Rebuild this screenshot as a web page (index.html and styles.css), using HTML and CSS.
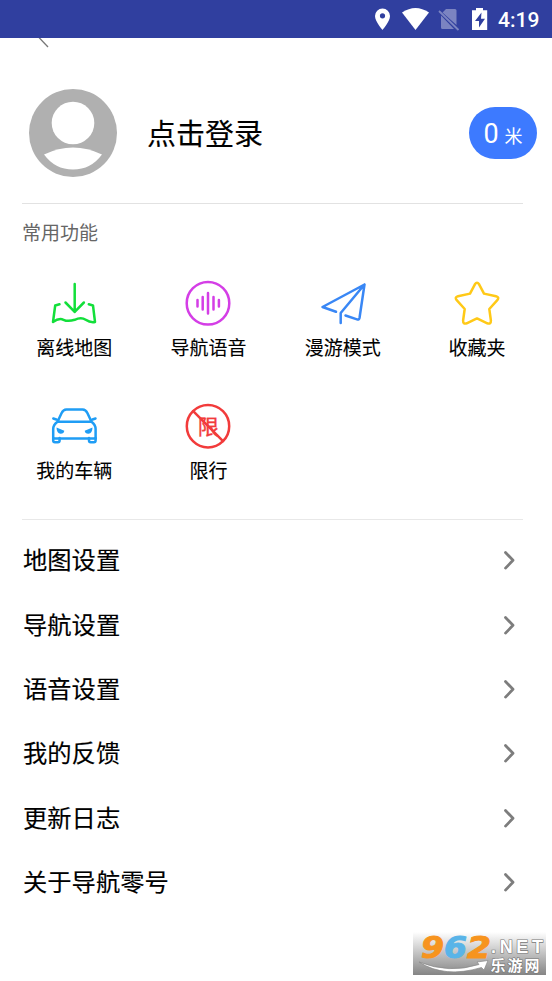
FILE: index.html
```html
<!DOCTYPE html>
<html lang="zh-CN">
<head>
<meta charset="utf-8">
<title>我的</title>
<link rel="stylesheet" href="styles.css">
</head>
<body>
<header class="status">
  <svg class="status-icons" viewBox="370 0 122 38" fill="#fff">
    <path fill-rule="evenodd" d="M382.500 8.500a7.500 7.500 0 0 0-7.500 7.500c0 5.500 7.500 14 7.500 14s7.500-8.500 7.500-14a7.500 7.500 0 0 0-7.500-7.500zm0 4.700a2.600 2.600 0 1 1 0 5.200 2.600 2.600 0 0 1 0-5.200z"/>
    <path d="M402 12.500Q415.500 3.500 429 12.500L415.500 30z"/>
    <g opacity=".36"><path d="M446 9h9q1.500 0 1.500 1.500V25L442.500 12.500zM441 15.500L454 29H442.500q-1.500 0-1.500-1.500z"/><path d="M439 11l19.500 19" stroke="#fff" stroke-width="1.800"/></g>
    <path fill-rule="evenodd" d="M472 10.300h4V8h7v2.300h4.200V30H472zM481.500 12.500l-6.500 8.500h4v6.500l6-8.700h-4z"/>
  </svg>
  <span class="clock">4:19</span>
</header>
<div class="topbar"><svg class="back" viewBox="36 38 16 12"><path d="M38.500 37l9.500 10" stroke="#777" stroke-width="1.300" fill="none"/></svg></div>
<main>
  <section class="profile">
    <svg class="avatar" viewBox="0 0 88 88"><circle cx="44" cy="44" r="44" fill="#b0b0b0"/><circle cx="44" cy="34" r="21.300" fill="#fff"/><path d="M15 65.500Q44 51.500 73 65.500Q62 80.500 44 80.500T15 65.500z" fill="#fff"/></svg>
    <span class="login">点击登录</span>
    <span class="distance"><b>0</b><i>米</i></span>
  </section>
  <section class="features">
    <h2>常用功能</h2>
    <div class="grid">
      <div class="item">
        <svg class="icon green" viewBox="50 279 48 48"><path d="M74.700 284v28M65.500 302.500l9.200 9.300 9.200-9.300M59.500 304.300l-4.300 1.200-2.200 16.500q6-4.300 10.500-2.200t11.200 0q6.500-3 11 0t9.300 2.200l-2-16.500-4.200-1.200"/></svg>
        <span>离线地图</span>
      </div>
      <div class="item">
        <svg class="icon purple" viewBox="184.300 279 48 48"><circle cx="208.300" cy="303.300" r="21.300"/><path d="M197.800 300v6.500M203 297v12.500M208.300 293v20.500M213.800 297v12.500M219.200 300v6.500"/></svg>
        <span>导航语音</span>
      </div>
      <div class="item">
        <svg class="icon blue" viewBox="318.500 279 48 48"><path d="M335.500 311.800L322 307l42-22.500-5 33.500q-.4 2-2.500 1.400l-11.500-3.900M364 284.500l-23.800 28.500v10"/></svg>
        <span>漫游模式</span>
      </div>
      <div class="item">
        <svg class="icon yellow" viewBox="453 279 48 48"><path d="M474.900 284.300Q477 281.200 479.100 284.300L484 293.600 496 296.200Q499.700 297.200 497.300 300.200L489.300 309 490.900 320.500Q491 324.600 487.300 323.300L477 318.400 466.700 323.300Q463 324.600 463.100 320.500L464.700 309 456.700 300.200Q454.300 297.200 458 296.200L470 293.600z"/></svg>
        <span>收藏夹</span>
      </div>
      <div class="item">
        <svg class="icon sky" viewBox="50 402 48 48"><path d="M57.500 421.700l4-8.500q1.700-3.500 4.900-3.600h16.200q3.200.1 4.900 3.600l4 8.500M57.500 421.700h34q4.100 3 4.100 7.300v9.500H53.200V429q0-4.300 4.300-7.300zM53.300 418.500l3 1M95.500 418.500l-3 1"/><path d="M53.200 438v2.500q0 1.700 1.700 1.700h3q1.700 0 1.700-1.700V438M89 438v2.500q0 1.700 1.700 1.700h3.200q1.700 0 1.700-1.700V438"/><path class="solid" d="M56.500 427.500l7.800 3.300q-.3 3-3.800 2.900-3.800-.4-4-6.200zM92.500 427.500l-7.800 3.300q.3 3 3.800 2.900 3.800-.4 4-6.200z"/></svg>
        <span>我的车辆</span>
      </div>
      <div class="item">
        <svg class="icon red" viewBox="184.300 402 48 48"><circle cx="208.300" cy="426.200" r="21.200"/><text x="208.500" y="433.700">限</text><path d="M193.500 411.200l29.800 30"/></svg>
        <span>限行</span>
      </div>
    </div>
  </section>
  <nav class="menu">
    <a><span>地图设置</span><svg viewBox="0 0 14 22"><path d="M3.500 3.500l7.500 7.800-7.500 7.800"/></svg></a>
    <a><span>导航设置</span><svg viewBox="0 0 14 22"><path d="M3.500 3.500l7.500 7.800-7.500 7.800"/></svg></a>
    <a><span>语音设置</span><svg viewBox="0 0 14 22"><path d="M3.500 3.500l7.500 7.800-7.500 7.800"/></svg></a>
    <a><span>我的反馈</span><svg viewBox="0 0 14 22"><path d="M3.500 3.500l7.500 7.800-7.500 7.800"/></svg></a>
    <a><span>更新日志</span><svg viewBox="0 0 14 22"><path d="M3.500 3.500l7.500 7.800-7.500 7.800"/></svg></a>
    <a><span>关于导航零号</span><svg viewBox="0 0 14 22"><path d="M3.500 3.500l7.500 7.800-7.500 7.800"/></svg></a>
  </nav>
</main>
<svg class="watermark" viewBox="413 932 133 43">
  <defs><linearGradient id="shade" x2="0" y2="1"><stop offset="0" stop-color="#fff"/><stop offset=".45" stop-color="#c8c8c8"/><stop offset="1" stop-color="#858585"/></linearGradient></defs>
  <path fill="url(#shade)" d="M413 932h133v43H413z"/>
  <g class="digits"><text x="421" y="958" textLength="23" lengthAdjust="spacingAndGlyphs" fill="#f7941e" stroke="#f7941e">9</text><text x="444" y="958" textLength="23" lengthAdjust="spacingAndGlyphs" fill="#59b4e8" stroke="#59b4e8">6</text><text x="467" y="958" textLength="24" lengthAdjust="spacingAndGlyphs" fill="#f7941e" stroke="#f7941e">2</text></g>
  <path d="M419 962q30 12 60 2.500l-2-2.500 11-1.500-4 9.500-2.500-2.500q-37 11-62.500-5.500z" fill="#fff" stroke="#888" stroke-width=".7"/>
  <text class="net" x="491" y="952.500" textLength="52">.NET</text>
  <text class="site" x="490.500" y="970.500" textLength="49">乐游网</text>
</svg>
</body>
</html>
```

FILE: styles.css
```css
* { box-sizing: border-box; }
body {
  margin: 0;
  width: 552px;
  height: 981px;
  overflow: hidden;
  background: #fff;
  color: #000;
  font-family: Roboto, "Noto Sans CJK SC", sans-serif;
}
svg { display: block; flex: none; }
.status {
  display: flex;
  justify-content: flex-end;
  align-items: center;
  height: 38px;
  padding-right: 13px;
  background: #303f9f;
  color: #fff;
}
.status-icons { width: 122px; height: 38px; }
.clock { width: 47px; padding-left: 6px; font-size: 21px; font-weight: 500; line-height: 38px; padding-top: 1px; }
.topbar { height: 24px; padding-left: 36px; }
.back { width: 16px; height: 12px; }
main { padding: 0 7px; }
.profile {
  display: flex;
  align-items: center;
  height: 142px;
  margin: 0 22px 0 15px;
  padding-left: 7px;
  border-bottom: 1px solid #e2e2e2;
}
.avatar { width: 88px; height: 88px; }
.login { margin-left: 30px; padding-top: 4px; font-size: 29px; line-height: 40px; -webkit-text-stroke: .15px; }
.distance {
  display: flex;
  align-items: baseline;
  justify-content: center;
  gap: 6px;
  width: 68px;
  height: 52px;
  margin: 0 -14px 0 auto;
  border-radius: 26px;
  background: #3d7aff;
  color: #fff;
  line-height: 54px;
}
.distance b { font-size: 27px; font-weight: 400; }
.distance i { font-size: 18px; font-style: normal; }
.features { height: 315px; }
h2 {
  margin: 0 0 0 15px;
  padding-top: 16px;
  height: 75px;
  font-size: 19px;
  line-height: 28px;
  font-weight: 400;
  color: #666;
}
.grid { display: grid; grid-template-columns: repeat(4, 134.300px); grid-auto-rows: 123px; }
.item { display: flex; flex-direction: column; align-items: center; font-size: 19px; }
.item span { margin-top: 8px; line-height: 28px; -webkit-text-stroke: .1px; }
.icon { width: 48px; height: 48px; fill: none; stroke-width: 2.500px; stroke-linecap: round; stroke-linejoin: round; }
.green { stroke: #12df3a; }
.purple { stroke: #d43ee6; }
.blue { stroke: #3987f5; }
.yellow { stroke: #ffc917; }
.sky { stroke: #1f9df5; }
.sky .solid { fill: #1f9df5; stroke: none; }
.red { stroke: #f23b3b; }
.red text { fill: #f23b3b; stroke: #f23b3b; stroke-width: .4px; font-size: 21px; text-anchor: middle; }
.menu { margin: 0 22px 0 15px; padding-top: 8px; border-top: 1px solid #e8e8e8; }
.menu a {
  display: flex;
  align-items: center;
  justify-content: space-between;
  height: 64.400px;
  padding: 0 7px 0 1px;
  font-size: 24.300px;
}
.menu span { padding-bottom: 3px; -webkit-text-stroke: .15px; }
.menu svg { width: 14px; height: 22px; fill: none; stroke: #7d7d7d; stroke-width: 2.800px; stroke-linecap: round; stroke-linejoin: round; }
.watermark { position: absolute; left: 413px; top: 932px; width: 133px; height: 43px; }
.digits { font: italic 700 30px "DejaVu Sans", sans-serif; stroke-width: 1px; }
.net, .site { fill: #fff; stroke: #777; stroke-width: 1.200px; paint-order: stroke; font-weight: 700; }
.net { font-family: "Liberation Sans", sans-serif; font-size: 18px; }
.site { font-family: "Noto Sans CJK SC", sans-serif; font-size: 15px; }
```
